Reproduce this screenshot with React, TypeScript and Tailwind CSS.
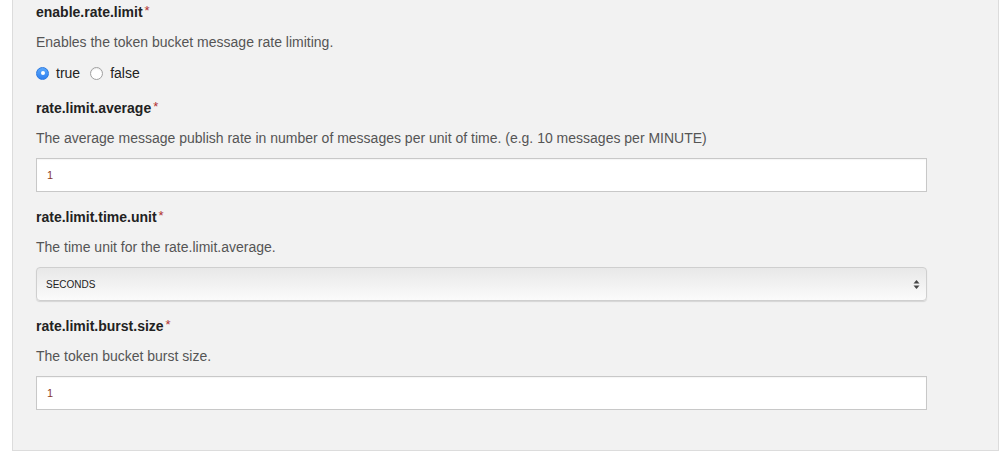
import React from "react";

function Label({ text }: { text: string }) {
  return (
    <div className="h-5 flex items-center text-[14px] font-bold text-[#222]">
      <span>{text}</span>
      <span className="text-[#b03030] text-[13px] ml-[2px] -mt-[2px] font-normal">*</span>
    </div>
  );
}

function Desc({ text }: { text: string }) {
  return <div className="mt-[10px] h-5 leading-5 text-[14px] text-[#555]">{text}</div>;
}

function TextInput({ value }: { value: string }) {
  return (
    <div className="mt-[10px] h-[34px] w-[891px] bg-white border border-[#c8c8c8] flex items-center pl-[10px] text-[11px] text-[#8a3a2a] shadow-[inset_0_1px_1px_rgba(0,0,0,0.04)]">
      {value}
    </div>
  );
}

function Select() {
  return (
    <div className="mt-[10px] h-[34px] w-[891px] rounded-[4px] border border-[#cfcfcf] bg-gradient-to-b from-[#e8e8e8] to-[#fbfbfb] flex items-center justify-between pl-[9px] pr-[6px] text-[10px] text-[#222] shadow-[0_1px_1px_rgba(0,0,0,0.12)]">
      <span>SECONDS</span>
      <svg width="7" height="11" viewBox="0 0 7 11">
        <path d="M3.5 1 L6.5 4.5 L0.5 4.5 Z" fill="#444" />
        <path d="M3.5 10 L6.5 6.5 L0.5 6.5 Z" fill="#444" />
      </svg>
    </div>
  );
}

export default function App() {
  return (
    <div className="w-[1008px] h-[461px] bg-white overflow-hidden" style={{ fontFamily: '"Liberation Sans", Arial, sans-serif' }}>
      <div className="ml-[12px] w-[987px] h-[451px] bg-[#f2f2f2] border border-t-0 border-[#dcdcdc] pl-[23px] pt-[2px]">
        <Label text="enable.rate.limit" />
        <Desc text="Enables the token bucket message rate limiting." />
        <div className="mt-[11px] h-5 flex items-center text-[14px] text-[#222]">
          <span className="w-[13px] h-[13px] rounded-full bg-gradient-to-b from-[#5aa7fb] to-[#2f80f0] border border-[#2b78e0] flex items-center justify-center">
            <span className="w-[4px] h-[4px] rounded-full bg-white" />
          </span>
          <span className="ml-[7px]">true</span>
          <span className="ml-[10px] w-[13px] h-[13px] rounded-full bg-white border border-[#a0a0a0] shadow-[inset_0_1px_1px_rgba(0,0,0,0.08)]" />
          <span className="ml-[7px]">false</span>
        </div>

        <div className="mt-[15px]">
          <Label text="rate.limit.average" />
          <Desc text="The average message publish rate in number of messages per unit of time. (e.g. 10 messages per MINUTE)" />
          <TextInput value="1" />
        </div>

        <div className="mt-[15px]">
          <Label text="rate.limit.time.unit" />
          <Desc text="The time unit for the rate.limit.average." />
          <Select />
        </div>

        <div className="mt-[15px]">
          <Label text="rate.limit.burst.size" />
          <Desc text="The token bucket burst size." />
          <TextInput value="1" />
        </div>
      </div>
    </div>
  );
}
